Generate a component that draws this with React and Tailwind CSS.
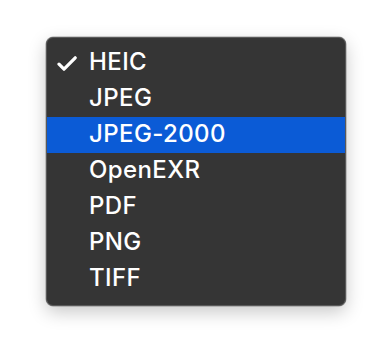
const items = ["HEIC", "JPEG", "JPEG-2000", "OpenEXR", "PDF", "PNG", "TIFF"];

const Check = () => (
  <svg
    xmlns="http://www.w3.org/2000/svg"
    viewBox="0 0 20 15"
    className="w-[20px] h-[15px]"
    fill="none"
    stroke="currentColor"
    strokeWidth={3.2}
    strokeLinecap="round"
    strokeLinejoin="round"
  >
    <path d="M2 8.2 L7 13.2 L18.2 1.8" />
  </svg>
);

export default function App() {
  const checked = "HEIC";
  const selected = "JPEG-2000";

  return (
    <div className="w-[392px] h-[360px] bg-white pt-[37px] pl-[46px] font-['Inter','Liberation_Sans',sans-serif]">
      <div className="w-[300px] h-[269px] rounded-[7px] bg-[#353535] border border-[#595959] shadow-[0_6px_18px_rgba(0,0,0,0.22),0_0_0_0.5px_rgba(0,0,0,0.35)] pt-[7px] overflow-hidden">
        <ul>
          {items.map((item) => (
            <li
              key={item}
              className={`h-[36px] flex items-center text-[24px] font-medium leading-none tracking-[0.4px] text-white ${
                item === selected ? "bg-[#0b5bd6]" : ""
              }`}
            >
              <span className="w-[42px] flex justify-end pr-[12px] pt-[1px]">
                {item === checked && <Check />}
              </span>
              <span className="-mt-[2px]">{item}</span>
            </li>
          ))}
        </ul>
      </div>
    </div>
  );
}
